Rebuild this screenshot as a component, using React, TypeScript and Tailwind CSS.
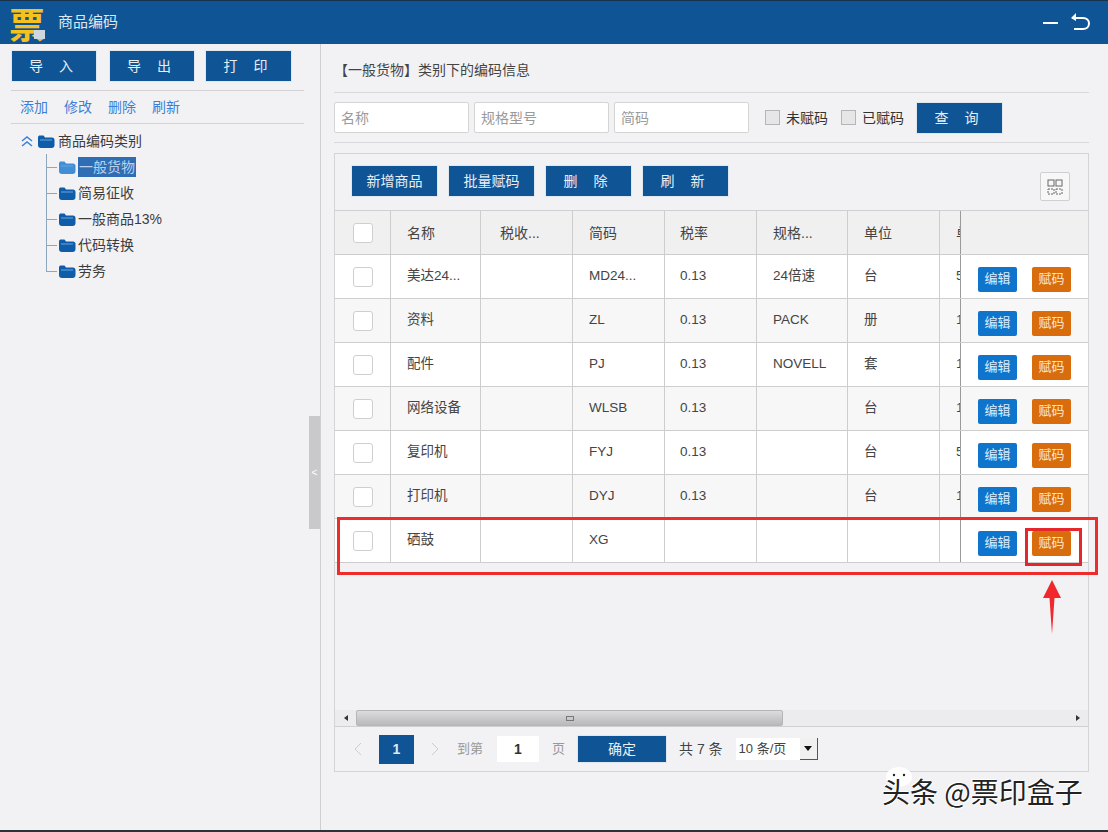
import React from 'react';

const rows = [
  { name: '美达24...', tax: '', code: 'MD24...', rate: '0.13', spec: '24倍速', unit: '台', extra: '5' },
  { name: '资料', tax: '', code: 'ZL', rate: '0.13', spec: 'PACK', unit: '册', extra: '1' },
  { name: '配件', tax: '', code: 'PJ', rate: '0.13', spec: 'NOVELL', unit: '套', extra: '1' },
  { name: '网络设备', tax: '', code: 'WLSB', rate: '0.13', spec: '', unit: '台', extra: '1' },
  { name: '复印机', tax: '', code: 'FYJ', rate: '0.13', spec: '', unit: '台', extra: '5' },
  { name: '打印机', tax: '', code: 'DYJ', rate: '0.13', spec: '', unit: '台', extra: '1' },
  { name: '硒鼓', tax: '', code: 'XG', rate: '', spec: '', unit: '', extra: '' },
];

const treeItems = ['一般货物', '简易征收', '一般商品13%', '代码转换', '劳务'];

const Folder = ({ light }: { light?: boolean }) => (
  <svg width="18" height="15" viewBox="0 0 18 15" className="shrink-0">
    <path d="M1 3.5C1 2 2 1.500 3 1.500h3.500l1.500 2h7c1.500 0 2.500 1 2.500 2.500v5c0 2-1 3-3 3H4c-2 0-3-1-3-3z" fill={light ? '#3f8ed6' : '#0f5ca8'} />
    <path d="M3 6h12" stroke="#6aa6dd" strokeWidth="1" />
  </svg>
);

function BlueBtn({ label, className }: { label: string; className: string }) {
  return (
    <div className={`bg-[#0f5596] text-[#e8eef5] text-sm flex items-center justify-center border border-[#dfe7ef] ${className}`}>
      {label}
    </div>
  );
}

function Check() {
  return <div className="w-5 h-5 rounded-[3px] border border-[#cfcfcf] bg-white" />;
}

function Cell({ children, className = '' }: { children?: React.ReactNode; className?: string }) {
  return <div className={`flex items-center overflow-hidden border-r border-[#cdcdcd] pl-4 whitespace-nowrap ${className}`}>{children}</div>;
}

const gridCols = 'grid grid-cols-[56px_90px_92px_92px_92px_91px_92px_21px_129px]';

export default function App() {
  return (
    <div className="relative w-[1108px] h-[832px] overflow-hidden bg-[#f2f2f4] text-[#444] flex flex-col border-b-2 border-[#2d3238] font-['Liberation_Sans','Noto_Sans_CJK_SC',sans-serif]">
      {/* title bar */}
      <div className="h-[44px] shrink-0 bg-[#0f5596] border-t border-[#17324d] flex items-center pr-[17px]">
        <div className="w-[54px] ml-[4px] flex justify-start">
          <span className="relative ml-[5px] text-[36px] leading-[38px] font-bold text-[#f5c11f] font-['Noto_Sans_CJK_SC',sans-serif]">
            票
            <span className="absolute right-0 bottom-[3px] w-[11px] h-[9px] bg-[#cfd8e0]" />
          </span>
        </div>
        <span className="text-[15px] text-[#dfe8f2]">商品编码</span>
        <div className="ml-auto flex items-center gap-[11px]">
          <div className="w-[15px] h-[2px] bg-white" />
          <svg width="22" height="24" viewBox="0 0 22 24" fill="none" stroke="#fff" strokeWidth="2">
            <path d="M3 7h11c3.500 0 6 2.300 6 5.500S17.500 18 14 18H5" />
            <path d="M7 2L2 7l5 3" fill="#fff" stroke="none" />
          </svg>
        </div>
      </div>

      <div className="flex flex-1 min-h-0">
        {/* left side */}
        <aside className="w-[321px] shrink-0 border-r border-[#cfcfd2] pl-[11px] pr-4 pt-[6px]">
          <div className="flex pb-2 border-b border-[#d5d0d2]">
            <BlueBtn label="导 入" className="w-[86px] h-[32px] tracking-[6px]" />
            <BlueBtn label="导 出" className="ml-[12px] w-[86px] h-[32px] tracking-[6px]" />
            <BlueBtn label="打 印" className="ml-[10px] w-[87px] h-[32px] tracking-[6px]" />
          </div>
          <div className="flex gap-4 h-[33px] items-center pl-[9px] text-sm text-[#3d7fd6] border-b border-[#d5d0d2]">
            <span>添加</span>
            <span>修改</span>
            <span>删除</span>
            <span>刷新</span>
          </div>
          <div className="pt-[4px] text-sm text-[#3c3c3c]">
            <div className="flex items-center h-[26px] pl-[10px]">
              <svg width="12" height="12" viewBox="0 0 12 12" fill="none" stroke="#3d7fd6" strokeWidth="1.500" className="mr-[4px]">
                <path d="M1 6l5-4 5 4M1 11l5-4 5 4" />
              </svg>
              <Folder />
              <span className="ml-[3px]">商品编码类别</span>
            </div>
            {treeItems.map((item, i) => (
              <div key={item} className="relative flex items-center h-[26px] pl-[47px]">
                <div className={`absolute left-[35px] top-0 w-px bg-[#8ea6bd] ${i === treeItems.length - 1 ? 'h-[13px]' : 'h-[26px]'}`} />
                <div className="absolute left-[35px] top-[13px] w-[11px] h-px bg-[#8ea6bd]" />
                <Folder light={i === 0} />
                <span className={`ml-[2px] ${i === 0 ? 'bg-[#2f6db5] text-[#b9d2ec] px-px' : ''}`}>{item}</span>
              </div>
            ))}
          </div>
        </aside>

        {/* right side */}
        <main className="flex-1 min-w-0 pl-[13px] pr-[19px] pb-[58px] flex flex-col">
          <div className="h-[49px] shrink-0 flex items-center border-b border-[#d8d8da] text-sm pt-[3px]">【一般货物】类别下的编码信息</div>
          <div className="h-[50px] shrink-0 flex items-center border-b border-[#d8d8da]">
            <div className="flex gap-[5px]">
              {['名称', '规格型号', '简码'].map((p) => (
                <div key={p} className="w-[135px] h-[31px] bg-white border border-[#d4d4d4] rounded-[2px] flex items-center pl-[6px] text-sm text-[#9a9a9a]">
                  {p}
                </div>
              ))}
            </div>
            <div className="ml-4 w-[15px] h-[15px] border border-[#b5b5b5] bg-[#e6e6e6]" />
            <span className="ml-[6px] text-sm text-[#333]">未赋码</span>
            <div className="ml-[13px] w-[15px] h-[15px] border border-[#b5b5b5] bg-[#e6e6e6]" />
            <span className="ml-[6px] text-sm text-[#333]">已赋码</span>
            <BlueBtn label="查 询" className="ml-[12px] w-[87px] h-[32px] tracking-[6px]" />
          </div>

          <div className="mt-[10px] flex-1 min-h-0 border border-[#d4d4d6] flex flex-col">
            <div className="h-[57px] shrink-0 flex items-start pt-[11px] pl-[16px] pr-[18px] gap-[10px] border-b border-[#d0d0d2]">
              <BlueBtn label="新增商品" className="w-[87px] h-[32px]" />
              <BlueBtn label="批量赋码" className="w-[87px] h-[32px]" />
              <BlueBtn label="删 除" className="w-[87px] h-[32px] tracking-[6px]" />
              <BlueBtn label="刷 新" className="w-[87px] h-[32px] tracking-[6px]" />
              <div className="ml-auto mt-[7px] w-[30px] h-[29px] bg-[#f7f7f7] border border-[#cfcfcf] rounded-[2px] flex items-center justify-center">
                <svg width="16" height="16" viewBox="0 0 16 16" fill="none" stroke="#666" strokeWidth="1">
                  <rect x="1" y="1" width="6" height="6" />
                  <rect x="9" y="1" width="6" height="6" />
                  <rect x="1" y="10" width="6" height="5" strokeDasharray="2 1" />
                  <rect x="9" y="10" width="6" height="5" strokeDasharray="2 1" />
                </svg>
              </div>
            </div>

            <div className={`${gridCols} h-[44px] shrink-0 border-b border-[#cdcdcd] text-sm bg-[#f0f0f1]`}>
              <Cell className="justify-center !pl-0"><Check /></Cell>
              <Cell>名称</Cell>
              <Cell className="!pl-[19px]">税收...</Cell>
              <Cell>简码</Cell>
              <Cell className="!pl-[15px]">税率</Cell>
              <Cell>规格...</Cell>
              <Cell>单位</Cell>
              <Cell className="border-r-[#9a9a9a]">单价</Cell>
              <div />
            </div>

            {rows.map((r, i) => (
              <div key={r.name} className={`${gridCols} h-[44px] shrink-0 border-b border-[#cdcdcd] text-[13.500px] ${i % 2 === 1 ? 'bg-[#f7f7f8]' : 'bg-white'}`}>
                <Cell className="justify-center !pl-0"><Check /></Cell>
                <Cell>{r.name}</Cell>
                <Cell />
                <Cell>{r.code}</Cell>
                <Cell className="!pl-[15px]">{r.rate}</Cell>
                <Cell>{r.spec}</Cell>
                <Cell>{r.unit}</Cell>
                <Cell className="border-r-[#9a9a9a]">{r.extra}</Cell>
                <div className="flex items-center gap-[15px] pl-[17px] pt-[5px]">
                  <div className="w-[39px] h-[25px] rounded-[2px] bg-[#0f74cc] text-[#dcecfa] text-[13px] flex items-center justify-center">编辑</div>
                  <div className="w-[39px] h-[25px] rounded-[2px] bg-[#d96c0c] text-[#fbe6cf] text-[13px] flex items-center justify-center">赋码</div>
                </div>
              </div>
            ))}

            <div className="flex-1 min-h-0" />

            {/* horizontal scrollbar */}
            <div className="h-[17px] shrink-0 bg-[#ececee] border-b border-[#d0d0d2] flex items-center pr-2">
              <span className="w-[21px] flex justify-center">
                <span className="border-y-[3px] border-y-transparent border-r-[4px] border-r-[#333]" />
              </span>
              <div className="w-[427px] h-[16px] rounded-[2px] bg-gradient-to-b from-[#dcdcde] to-[#b9b9bc] border border-[#b5b5b8] flex items-center justify-center">
                <span className="w-2 h-[5px] border border-[#777]" />
              </div>
              <span className="ml-auto border-y-[3px] border-y-transparent border-l-[4px] border-l-[#333]" />
            </div>

            {/* pagination */}
            <div className="h-[44px] shrink-0 flex items-center pl-[17px] text-[13px]">
              <svg width="12" height="14" viewBox="0 0 12 14" fill="none" stroke="#ccc" strokeWidth="1"><path d="M9 1L3 7l6 6" /></svg>
              <div className="ml-[15px] w-[35px] h-[29px] bg-[#0f5596] text-[#dde9f4] font-bold text-sm flex items-center justify-center">1</div>
              <svg width="12" height="14" viewBox="0 0 12 14" fill="none" stroke="#ccc" strokeWidth="1" className="ml-[15px]"><path d="M3 1l6 6-6 6" /></svg>
              <span className="ml-[16px] text-[#999]">到第</span>
              <div className="ml-[14px] w-[42px] h-[26px] bg-white text-[#333] font-bold text-sm flex items-center justify-center">1</div>
              <span className="ml-[13px] text-[#999]">页</span>
              <BlueBtn label="确定" className="ml-[12px] w-[90px] h-[28px]" />
              <span className="ml-[12px] text-sm text-[#444]">共 7 条</span>
              <div className="ml-[13px] w-[82px] h-[22px] bg-white flex items-center pl-[3px] text-[#444]">
                10 条/页
                <div className="ml-auto w-[18px] h-[22px] bg-[#f0f0f0] border-r border-b border-[#555] flex items-center justify-center">
                  <span className="border-x-[4px] border-x-transparent border-t-[5px] border-t-[#111]" />
                </div>
              </div>
            </div>
          </div>
        </main>
      </div>

      {/* collapse handle */}
      <div className="absolute left-[309px] top-[416px] w-[11px] h-[113px] bg-[#c9c9cb] flex items-center justify-center text-[10px] text-white">&lt;</div>

      {/* red annotations */}
      <div className="absolute left-[337px] top-[517px] w-[761px] h-[58px] border-[3px] border-[#ee2c2c]" />
      <div className="absolute left-[1025px] top-[528px] w-[57px] h-[38px] border-[3px] border-[#e5262b]" />
      <svg className="absolute left-[1043px] top-[580px]" width="18" height="54" viewBox="0 0 18 54">
        <path d="M9 0L18 18H11.500L9 54L6.500 18H0z" fill="#f0272c" />
      </svg>

      {/* watermark */}
      <svg className="absolute left-[885px] top-[766px]" width="28" height="24" viewBox="0 0 28 24">
        <ellipse cx="14" cy="11" rx="13" ry="10" fill="#fff" />
        <circle cx="9" cy="9" r="1.200" fill="#222" />
        <circle cx="19" cy="9" r="1.200" fill="#222" />
      </svg>
      <div className="absolute left-[882px] top-[771px] text-[28px] leading-[40px] text-[#222] font-['Noto_Sans_CJK_SC',sans-serif] whitespace-nowrap [text-shadow:1px_1px_0_#fff,-1px_-1px_0_#fff]">
        头条 @票印盒子
      </div>
    </div>
  );
}
